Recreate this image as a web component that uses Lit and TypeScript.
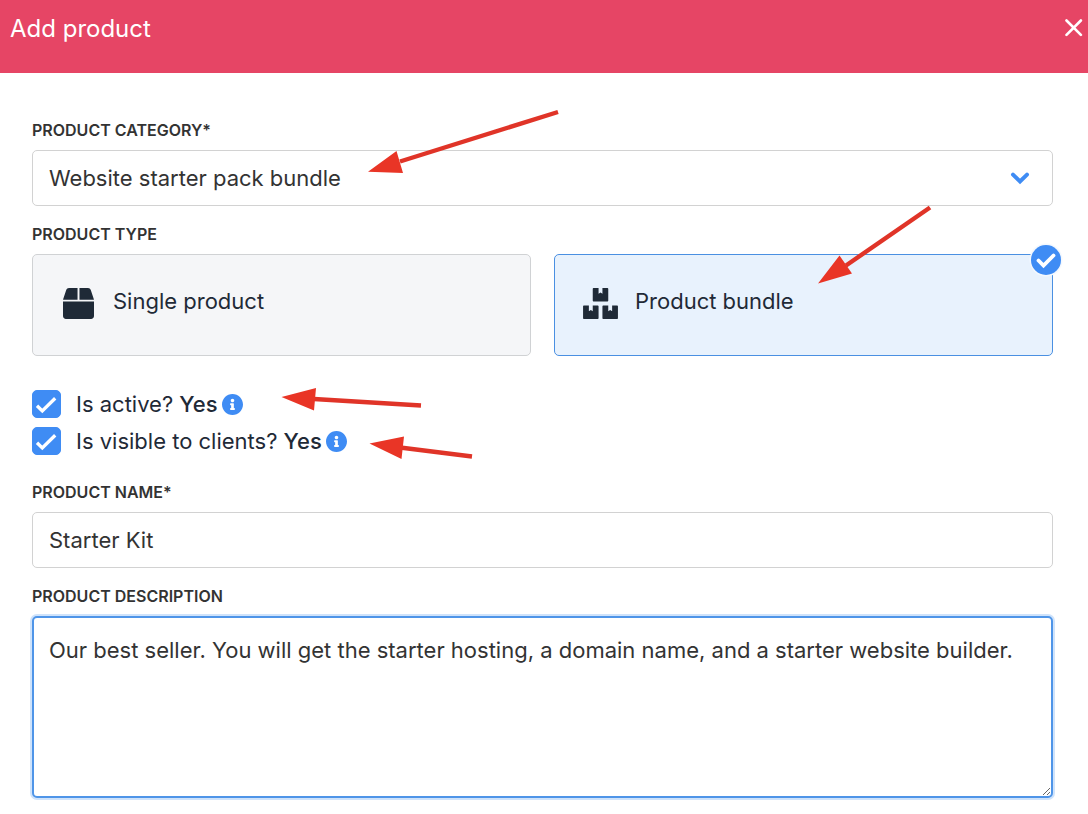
import { LitElement, html, css, svg } from "lit";
import { customElement, state } from "lit/decorators.js";

const ICONS = {
  box: svg`<path d="M509.5 184.6L458.9 32.8C452.4 13.2 434.1 0 413.4 0H272v192h238.7c-.4-2.5-.4-5-1.2-7.4zM240 0H98.6c-20.7 0-39 13.2-45.5 32.8L2.5 184.6c-.8 2.4-.8 4.9-1.2 7.4H240V0zM0 224v240c0 26.5 21.5 48 48 48h416c26.5 0 48-21.5 48-48V224H0z"/>`,
  boxes: svg`<path d="M560 288h-80v96l-32-21.3-32 21.3v-96h-80c-8.8 0-16 7.2-16 16v192c0 8.8 7.2 16 16 16h224c8.8 0 16-7.2 16-16V304c0-8.8-7.2-16-16-16zm-384-64h224c8.8 0 16-7.2 16-16V16c0-8.8-7.2-16-16-16h-80v96l-32-21.3L256 96V0h-80c-8.8 0-16 7.2-16 16v192c0 8.8 7.2 16 16 16zm64 64h-80v96l-32-21.3L96 384v-96H16c-8.8 0-16 7.2-16 16v192c0 8.8 7.2 16 16 16h224c8.8 0 16-7.2 16-16V304c0-8.8-7.2-16-16-16z"/>`,
  info: svg`<path d="M256 8C119.043 8 8 119.083 8 256c0 136.997 111.043 248 248 248s248-111.003 248-248C504 119.083 392.957 8 256 8zm0 110c23.196 0 42 18.804 42 42s-18.804 42-42 42-42-18.804-42-42 18.804-42 42-42zm56 254c0 6.627-5.373 12-12 12h-88c-6.627 0-12-5.373-12-12v-24c0-6.627 5.373-12 12-12h12v-64h-12c-6.627 0-12-5.373-12-12v-24c0-6.627 5.373-12 12-12h64c6.627 0 12 5.373 12 12v100h12c6.627 0 12 5.373 12 12v24z"/>`,
};

@customElement("app-root")
export class AppRoot extends LitElement {
  @state() private type = "bundle";
  @state() private active = true;
  @state() private visible = true;

  static styles = css`
    :host {
      display: block;
      position: relative;
      min-height: 100vh;
      background: #fff;
      color: #333;
      font: 400 22px/30px Inter, "Liberation Sans", sans-serif;
      overflow: hidden;
    }
    * {
      box-sizing: border-box;
    }
    .header {
      display: flex;
      justify-content: space-between;
      align-items: flex-start;
      padding: 14px 5px 29px 10px;
      background: #e64565;
      color: #fff;
    }
    .title {
      margin: 0;
      font-size: 24px;
      line-height: 30px;
      font-weight: 400;
    }
    .close {
      display: flex;
      padding: 5px 0;
      border: 0;
      background: none;
      color: inherit;
    }
    .form {
      display: flex;
      flex-direction: column;
      gap: 18px;
      padding: 47px 35px 16px 32px;
    }
    .field {
      display: flex;
      flex-direction: column;
      gap: 10px;
      min-width: 0;
    }
    .label {
      font-size: 16px;
      line-height: 20px;
      font-weight: 600;
      text-transform: uppercase;
    }
    .control {
      width: 100%;
      height: 56px;
      margin: 0;
      padding: 0 16px;
      border: 1px solid #d2d2d2;
      border-radius: 5px;
      background: #fff;
      color: inherit;
      font: inherit;
      outline: none;
      appearance: none;
    }
    .stack {
      display: grid;
      align-items: center;
    }
    .stack > * {
      grid-area: 1 / 1;
    }
    .chevron {
      justify-self: end;
      margin-right: 23px;
      pointer-events: none;
    }
    .area {
      display: block;
      height: 182px;
      padding: 17px 15px;
      border: 2px solid #4f95e8;
      box-shadow: 0 0 0 2px #cfe3fb;
      resize: vertical;
    }
    .cards {
      display: grid;
      grid-template-columns: 1fr 1fr;
      gap: 23px;
    }
    .card {
      position: relative;
      display: flex;
      gap: 17px;
      height: 102px;
      padding: 31px 28px;
      border: 1px solid #d0d2d4;
      border-radius: 5px;
      background: #f5f6f8;
      color: #1f2a37;
    }
    .card.selected {
      border-color: #4a90e2;
      background: #e8f2fd;
    }
    .hidden {
      position: absolute;
      opacity: 0;
      margin: 0;
    }
    .slot {
      display: flex;
      justify-content: center;
      width: 35px;
      padding-top: 2px;
    }
    .badge {
      position: absolute;
      top: -12px;
      right: -11px;
    }
    .checks {
      display: flex;
      flex-direction: column;
      gap: 9px;
      padding: 16px 0 9px;
      color: #1f2a37;
    }
    .row {
      display: flex;
      align-items: center;
      gap: 4px;
      height: 28px;
    }
    .choice {
      display: flex;
      align-items: center;
      gap: 15px;
    }
    .tick {
      width: 29px;
      height: 28px;
      margin: 0;
      border: 1px solid #3f8cf4;
      border-radius: 5px;
      appearance: none;
      background: #fff;
    }
    .tick:checked {
      background: #3f8cf4;
    }
    .mark {
      pointer-events: none;
    }
    .yes {
      font-weight: 500;
    }
    .info {
      display: flex;
      padding: 0;
      border: 0;
      background: none;
      color: #3f8cf4;
    }
    .arrows {
      position: absolute;
      top: 0;
      left: 0;
      pointer-events: none;
    }
  `;

  private card(value: string, text: string, icon: unknown) {
    const on = this.type === value;
    return html`<label class="card ${on ? "selected" : ""}">
      <input class="hidden" type="radio" name="type" .checked=${on} @change=${() => (this.type = value)} />
      <span class="slot">${icon}</span>
      <span>${text}</span>
      ${on
        ? html`<svg class="badge" width="34" height="34" viewBox="0 0 34 34">
            <circle cx="17" cy="17" r="16.5" fill="#f3f8fe" />
            <circle cx="17" cy="17" r="15" fill="#3f8cf4" />
            <path d="M9.500 17.500l5 5 10-10" fill="none" stroke="#fff" stroke-width="3.8" stroke-linecap="round" />
          </svg>`
        : ""}
    </label>`;
  }

  private check(text: string, on: boolean, toggle: () => void) {
    return html`<div class="row">
      <label class="choice">
        <span class="stack">
          <input class="tick" type="checkbox" .checked=${on} @change=${toggle} />
          <svg class="mark" width="29" height="28" viewBox="0 0 29 28">
            ${on ? svg`<path d="M5 15.800l5.300 5.200L23.200 8.300" fill="none" stroke="#fff" stroke-width="3.300"/>` : ""}
          </svg>
        </span>
        <span>${text} <span class="yes">${on ? "Yes" : "No"}</span></span>
      </label>
      <button class="info" type="button" aria-label="More information">
        <svg width="21" height="21" viewBox="8 8 496 496" fill="currentColor">${ICONS.info}</svg>
      </button>
    </div>`;
  }

  render() {
    return html`
      <header class="header">
        <h1 class="title">Add product</h1>
        <button class="close" type="button" aria-label="Close">
          <svg width="18" height="18" viewBox="0 0 18 18" fill="none" stroke="currentColor" stroke-width="2.6" stroke-linecap="round">
            <path d="M1.500 1.500l14.400 14.400M15.900 1.500L1.500 15.900" />
          </svg>
        </button>
      </header>
      <form class="form">
        <div class="field">
          <label class="label" for="category">Product category*</label>
          <div class="stack">
            <select class="control" id="category">
              <option>Website starter pack bundle</option>
            </select>
            <svg class="chevron" width="20" height="14" viewBox="0 0 20 14" fill="none" stroke="#3f8cf4" stroke-width="4" stroke-linecap="round">
              <path d="M3 3.600l7 6.800L17 3.600" />
            </svg>
          </div>
        </div>
        <div class="field" role="radiogroup" aria-labelledby="type-label">
          <span class="label" id="type-label">Product type</span>
          <div class="cards">
            ${this.card("single", "Single product", html`<svg width="31" height="31" viewBox="0 0 512 512" fill="currentColor">${ICONS.box}</svg>`)}
            ${this.card("bundle", "Product bundle", html`<svg width="35" height="31" viewBox="0 0 576 512" fill="currentColor">${ICONS.boxes}</svg>`)}
          </div>
        </div>
        <div class="checks">
          ${this.check("Is active?", this.active, () => (this.active = !this.active))}
          ${this.check("Is visible to clients?", this.visible, () => (this.visible = !this.visible))}
        </div>
        <div class="field">
          <label class="label" for="name">Product name*</label>
          <input class="control" id="name" type="text" value="Starter Kit" />
        </div>
        <div class="field">
          <label class="label" for="description">Product description</label>
          <textarea class="control area" id="description" .value=${"Our best seller. You will get the starter hosting, a domain name, and a starter website builder."}></textarea>
        </div>
      </form>
      <svg class="arrows" width="1088" height="470" viewBox="0 0 1088 470" fill="#e93526" stroke="#e03428" aria-hidden="true">
        <path d="M558 112L400 161.500M930 207.500L846 265.500M421 405.500L314 399M472 456.500L402 447.800" stroke-width="4.400" />
        <path stroke="none" d="M368 171.700L396.500 151L403 173zM818 283.500L839.500 255.500L852 273.500zM281.500 397L316 388L314 410.500zM369.500 443.500L404 436.500L401.500 459z" />
      </svg>
    `;
  }
}
